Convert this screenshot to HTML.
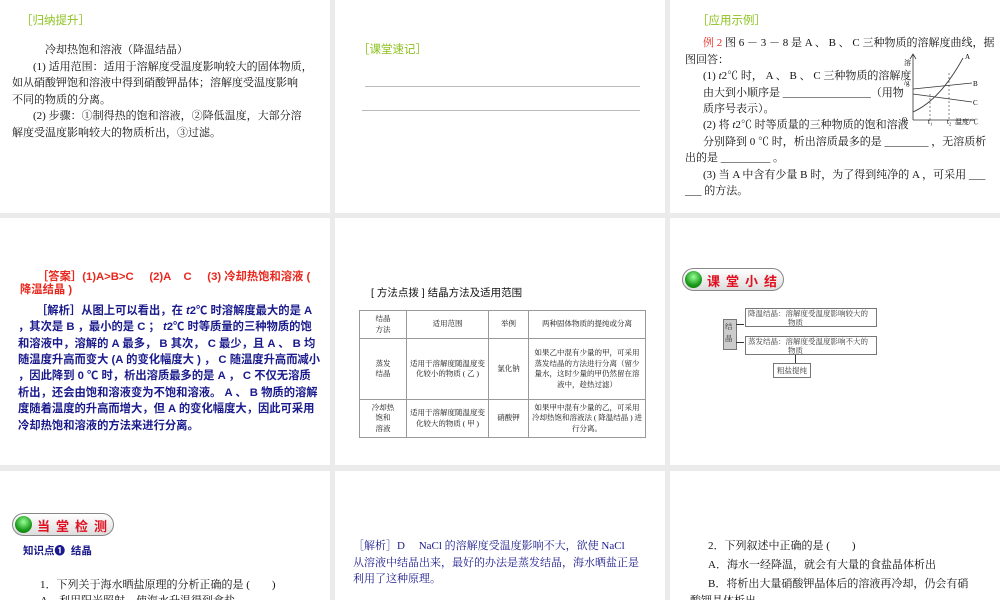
<!DOCTYPE html>
<html><head><meta charset="utf-8"><style>
body{margin:0;width:1000px;height:600px;background:#ebebeb;position:relative;overflow:hidden;font-family:"Liberation Serif","Noto Serif CJK SC","Noto Sans CJK SC",serif;color:#111}
.p{position:absolute;background:#fff;overflow:hidden}
.t{position:absolute;white-space:nowrap;font-size:11px}
.g{color:#8dc21f;font-family:"Liberation Sans","Noto Sans CJK SC",sans-serif;font-size:11.5px}
.blue{color:#1a1a8c;font-family:"Liberation Sans","Noto Sans CJK SC",sans-serif;font-weight:bold;font-size:11.3px}
.red{color:#e8281e;font-family:"Liberation Sans","Noto Sans CJK SC",sans-serif;font-weight:bold;font-size:11.3px}
table{border-collapse:collapse;position:absolute;font-size:7.5px;text-align:center}
td{border:1px solid #999;padding:0 3px;line-height:10.5px}
.pill{position:absolute;height:21px;border:1px solid #888;border-radius:12px;background:linear-gradient(#fff,#ddd);}
.pill .dot{position:absolute;left:2px;top:2px;width:17px;height:17px;border-radius:50%;background:radial-gradient(circle at 50% 35%,#9f9,#1a9a1a 60%,#0a6a0a)}
.pill span{position:absolute;top:2px;left:24px;color:#e01020;font-weight:bold;font-family:"Noto Sans CJK SC",sans-serif;font-size:13px;letter-spacing:6px;white-space:nowrap}
.bx{position:absolute;border:1px solid #777;font-size:7.5px;line-height:9px;background:#fff;color:#333}
</style></head><body>

<div class="p" style="left:0;top:0;width:330px;height:213px">
<div class="t g" style="left:21px;top:12px">［归纳提升］</div>
<div class="t" style="left:45px;top:41px">冷却热饱和溶液（降温结晶）</div>
<div class="t" style="left:33px;top:58px">(1) 适用范围：适用于溶解度受温度影响较大的固体物质，</div>
<div class="t" style="left:12px;top:74px">如从硝酸钾饱和溶液中得到硝酸钾晶体；溶解度受温度影响</div>
<div class="t" style="left:12px;top:91px">不同的物质的分离。</div>
<div class="t" style="left:33px;top:107px">(2) 步骤：①制得热的饱和溶液，②降低温度，大部分溶</div>
<div class="t" style="left:12px;top:124px">解度受温度影响较大的物质析出，③过滤。</div>
</div>

<div class="p" style="left:335px;top:0;width:330px;height:213px">
<div class="t g" style="left:23px;top:41px">［课堂速记］</div>
<div style="position:absolute;left:30px;top:86px;width:275px;height:1px;background:#bbb"></div>
<div style="position:absolute;left:27px;top:110px;width:278px;height:1px;background:#bbb"></div>
</div>

<div class="p" style="left:670px;top:0;width:330px;height:213px">
<div class="t g" style="left:27px;top:12px">［应用示例］</div>
<div class="t" style="left:33px;top:34px"><span style="color:#e8281e">例 2</span> 图 6 － 3 － 8 是 A 、 B 、 C 三种物质的溶解度曲线，据</div>
<div class="t" style="left:15px;top:51px">图回答：</div>
<div class="t" style="left:33px;top:67px">(1) <i>t</i>2℃ 时，  A 、 B 、 C 三种物质的溶解度</div>
<div class="t" style="left:33px;top:84px">由大到小顺序是 ________________（用物</div>
<div class="t" style="left:33px;top:100px">质序号表示）。</div>
<div class="t" style="left:33px;top:116px">(2) 将 <i>t</i>2℃ 时等质量的三种物质的饱和溶液</div>
<div class="t" style="left:33px;top:133px">分别降到 0 ℃ 时，析出溶质最多的是 ________ ，无溶质析</div>
<div class="t" style="left:15px;top:149px">出的是 _________ 。</div>
<div class="t" style="left:33px;top:166px">(3) 当  A 中含有少量 B 时，为了得到纯净的 A ，可采用 ___</div>
<div class="t" style="left:15px;top:182px">___ 的方法。</div>
<svg style="position:absolute;left:230px;top:50px" width="100" height="80" font-size="7" font-family="Liberation Serif,Noto Serif CJK SC,serif">
<path d="M13 70V5M10 9l3-5 3 5M13 70H75" stroke="#333" fill="none" stroke-width=".8"/>
<path d="M13 62Q40 50 63 8" stroke="#333" fill="none" stroke-width=".8"/>
<path d="M13 39L72 33M13 44L72 52" stroke="#333" fill="none" stroke-width=".8"/>
<path d="M30 44V70M49 23V70" stroke="#333" stroke-dasharray="2,2" stroke-width=".6"/>
<text x="65" y="9">A</text><text x="73" y="36">B</text><text x="73" y="55">C</text>
<text x="4" y="15">溶</text><text x="4" y="35">/g</text><text x="2" y="72">O</text><text x="28" y="74">t₁</text><text x="47" y="74">t₂</text><text x="55" y="74">温度/℃</text>
</svg>
</div>

<div class="p" style="left:0;top:218px;width:330px;height:247px">
<div class="t red" style="left:37px;top:50px">［答案］(1)A&gt;B&gt;C &nbsp;&nbsp;&nbsp;&nbsp;(2)A &nbsp;&nbsp;&nbsp;C &nbsp;&nbsp;&nbsp;&nbsp;(3) 冷却热饱和溶液 (</div>
<div class="t red" style="left:20px;top:63px">降温结晶 )</div>
<div class="t blue" style="left:36px;top:84px">［解析］从图上可以看出，在 <i>t</i>2℃ 时溶解度最大的是 A</div>
<div class="t blue" style="left:18px;top:100px">，其次是 B ，最小的是 C ；  <i>t</i>2℃ 时等质量的三种物质的饱</div>
<div class="t blue" style="left:18px;top:117px">和溶液中，溶解的 A 最多， B 其次， C 最少，且 A 、 B 均</div>
<div class="t blue" style="left:18px;top:133px">随温度升高而变大 (A 的变化幅度大 ) ， C 随温度升高而减小</div>
<div class="t blue" style="left:18px;top:149px">，因此降到 0 ℃ 时，析出溶质最多的是 A ， C 不仅无溶质</div>
<div class="t blue" style="left:18px;top:166px">析出，还会由饱和溶液变为不饱和溶液。 A 、 B 物质的溶解</div>
<div class="t blue" style="left:18px;top:182px">度随着温度的升高而增大，但 A 的变化幅度大，因此可采用</div>
<div class="t blue" style="left:18px;top:199px">冷却热饱和溶液的方法来进行分离。</div>
</div>

<div class="p" style="left:335px;top:218px;width:330px;height:247px">
<div class="t" style="left:36px;top:67px;font-family:'Liberation Sans','Noto Sans CJK SC',sans-serif;font-size:10.5px">[ 方法点拨 ]  结晶方法及适用范围</div>
<table style="left:24px;top:92px;width:287px;height:128px">
<tr style="height:28px"><td style="width:40px">结晶<br>方法</td><td style="width:75px">适用范围</td><td style="width:33px">举例</td><td>两种固体物质的提纯或分离</td></tr>
<tr style="height:61px"><td>蒸发<br>结晶</td><td>适用于溶解度随温度变化较小的物质 ( 乙 )</td><td>氯化钠</td><td>如果乙中混有少量的甲，可采用蒸发结晶的方法进行分离（留少量水，这时少量的甲仍然留在溶液中，趁热过滤）</td></tr>
<tr><td>冷却热<br>饱和<br>溶液</td><td>适用于溶解度随温度变化较大的物质 ( 甲 )</td><td>硝酸钾</td><td>如果甲中混有少量的乙，可采用冷却热饱和溶液法 ( 降温结晶 ) 进行分离。</td></tr>
</table>
</div>

<div class="p" style="left:670px;top:218px;width:330px;height:247px">
<div class="pill" style="left:12px;top:50px;width:100px"><div class="dot"></div><span>课堂小结</span></div>
<div class="bx" style="left:53px;top:101px;width:10px;height:27px;background:#ccc;padding:1px;line-height:12px">结<br>晶</div>
<div style="position:absolute;left:66px;top:106px;width:8px;height:1px;background:#333"></div>
<div style="position:absolute;left:66px;top:124px;width:8px;height:1px;background:#333"></div>
<div class="bx" style="left:75px;top:90px;width:126px;height:17px;padding:0 2px">降温结晶：溶解度受温度影响较大的<br><span style="padding-left:40px">物质</span></div>
<div class="bx" style="left:75px;top:118px;width:126px;height:17px;padding:0 2px">蒸发结晶：溶解度受温度影响不大的<br><span style="padding-left:40px">物质</span></div>
<div style="position:absolute;left:125px;top:137px;width:1px;height:8px;background:#333"></div>
<div class="bx" style="left:103px;top:145px;width:36px;height:13px;text-align:center;line-height:13px">粗盐提纯</div>
</div>

<div class="p" style="left:0;top:471px;width:330px;height:129px">
<div class="pill" style="left:12px;top:42px;width:100px"><div class="dot"></div><span>当堂检测</span></div>
<div class="t" style="left:23px;top:72px;color:#1a1a8c;font-weight:bold;font-family:'Liberation Sans','Noto Sans CJK SC',sans-serif;font-size:10.5px">知识点❶ &nbsp;结晶</div>
<div class="t" style="left:40px;top:105px">1．下列关于海水晒盐原理的分析正确的是 (　　)</div>
<div class="t" style="left:40px;top:121px">A．利用阳光照射，使海水升温得到食盐</div>
</div>

<div class="p" style="left:335px;top:471px;width:330px;height:129px">
<div class="t" style="left:18px;top:66px;color:#1a1a8c">［解析］D 　NaCl 的溶解度受温度影响不大，欲使 NaCl</div>
<div class="t" style="left:18px;top:83px;color:#1a1a8c">从溶液中结晶出来，最好的办法是蒸发结晶，海水晒盐正是</div>
<div class="t" style="left:18px;top:99px;color:#1a1a8c">利用了这种原理。</div>
</div>

<div class="p" style="left:670px;top:471px;width:330px;height:129px">
<div class="t" style="left:38px;top:66px">2．下列叙述中正确的是 (　　)</div>
<div class="t" style="left:38px;top:85px">A．海水一经降温，就会有大量的食盐晶体析出</div>
<div class="t" style="left:38px;top:104px">B．将析出大量硝酸钾晶体后的溶液再冷却，仍会有硝</div>
<div class="t" style="left:20px;top:121px">酸钾晶体析出</div>
</div>
</body></html>
